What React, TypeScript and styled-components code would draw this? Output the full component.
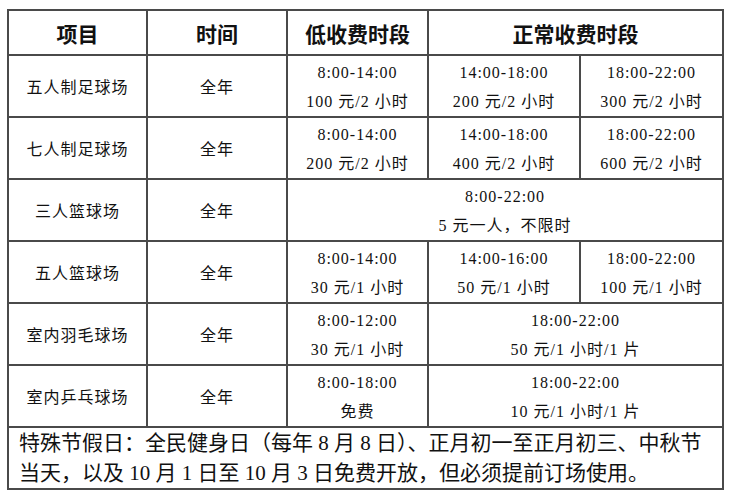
import React from "react";
import styled, { createGlobalStyle } from "styled-components";

const GlobalStyle = createGlobalStyle`
  body {
    margin: 0;
    background: #ffffff;
  }
`;

const Page = styled.div`
  padding: 9px 0 0 7px;
  width: 731px;
  height: 500px;
  box-sizing: border-box;
  background: #ffffff;
`;

const Table = styled.table`
  width: 715px;
  border-collapse: collapse;
  table-layout: fixed;
  color: #111111;
  font-family: "Liberation Serif", "Noto Sans CJK SC", serif;
`;

const Row = styled.tr<{ $h: number }>`
  height: ${p => p.$h}px;
`;

const HeadCell = styled.th`
  border: 2px solid #4a4a4a;
  padding: 0;
  font-family: "Noto Sans CJK SC", sans-serif;
  font-size: 21px;
  font-weight: 700;
  text-align: center;
  vertical-align: middle;
  line-height: 28px;
`;

const Cell = styled.td`
  border: 2px solid #4a4a4a;
  padding: 2px 0 0;
  font-size: 16px;
  letter-spacing: 1px;
  line-height: 29px;
  text-align: center;
  vertical-align: middle;
`;

const NoteCell = styled.td`
  border: 2px solid #4a4a4a;
  padding: 0 6px 0 10px;
  font-size: 21px;
  line-height: 30px;
  text-align: left;
  vertical-align: middle;
`;

type Price = { time: string; fee: string; span?: number };
type Venue = { name: string; prices: Price[] };

const venues: Venue[] = [
  {
    name: "五人制足球场",
    prices: [
      { time: "8:00-14:00", fee: "100 元/2 小时" },
      { time: "14:00-18:00", fee: "200 元/2 小时" },
      { time: "18:00-22:00", fee: "300 元/2 小时" }
    ]
  },
  {
    name: "七人制足球场",
    prices: [
      { time: "8:00-14:00", fee: "200 元/2 小时" },
      { time: "14:00-18:00", fee: "400 元/2 小时" },
      { time: "18:00-22:00", fee: "600 元/2 小时" }
    ]
  },
  {
    name: "三人篮球场",
    prices: [{ time: "8:00-22:00", fee: "5 元一人，不限时", span: 3 }]
  },
  {
    name: "五人篮球场",
    prices: [
      { time: "8:00-14:00", fee: "30 元/1 小时" },
      { time: "14:00-16:00", fee: "50 元/1 小时" },
      { time: "18:00-22:00", fee: "100 元/1 小时" }
    ]
  },
  {
    name: "室内羽毛球场",
    prices: [
      { time: "8:00-12:00", fee: "30 元/1 小时" },
      { time: "18:00-22:00", fee: "50 元/1 小时/1 片", span: 2 }
    ]
  },
  {
    name: "室内乒乓球场",
    prices: [
      { time: "8:00-18:00", fee: "免费" },
      { time: "18:00-22:00", fee: "10 元/1 小时/1 片", span: 2 }
    ]
  }
];

const heights = [62, 62, 62, 62, 61, 62];

const App = () => {
  return (
    <>
      <GlobalStyle />
      <Page>
        <Table>
          <colgroup>
            <col style={{ width: 139 }} />
            <col style={{ width: 140 }} />
            <col style={{ width: 141 }} />
            <col style={{ width: 152 }} />
            <col style={{ width: 143 }} />
          </colgroup>
          <thead>
            <Row $h={45}>
              <HeadCell>项目</HeadCell>
              <HeadCell>时间</HeadCell>
              <HeadCell>低收费时段</HeadCell>
              <HeadCell colSpan={2}>正常收费时段</HeadCell>
            </Row>
          </thead>
          <tbody>
            {venues.map((v, i) => (
              <Row $h={heights[i]} key={v.name}>
                <Cell>{v.name}</Cell>
                <Cell>全年</Cell>
                {v.prices.map((p, j) => (
                  <Cell colSpan={p.span || 1} key={j}>
                    {p.time}
                    <br />
                    {p.fee}
                  </Cell>
                ))}
              </Row>
            ))}
            <Row $h={62}>
              <NoteCell colSpan={5}>
                特殊节假日：全民健身日（每年 8 月 8 日）、正月初一至正月初三、中秋节当天，以及 10 月 1 日至 10 月 3 日免费开放，但必须提前订场使用。
              </NoteCell>
            </Row>
          </tbody>
        </Table>
      </Page>
    </>
  );
};

export default App;
